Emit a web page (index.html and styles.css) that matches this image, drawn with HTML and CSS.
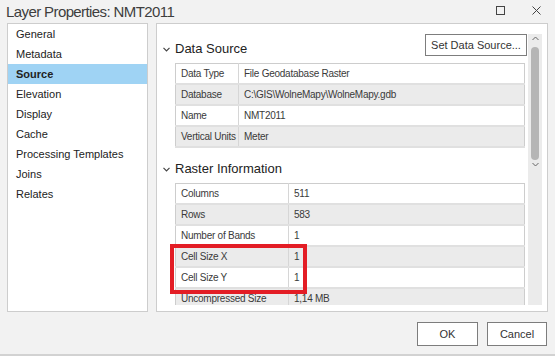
FILE: index.html
```html
<!DOCTYPE html>
<html lang="en">
<head>
    <meta charset="UTF-8">
    <meta name="viewport" content="width=device-width, initial-scale=1.0">
    <title>Layer Properties: NMT2011</title>
    <link rel="stylesheet" href="styles.css">
</head>
<body>

    <div class="dialog">
        <!-- Title Bar -->
        <div class="titlebar">
            <span class="title">Layer Properties: NMT2011</span>
            <div class="win-controls">
                <svg width="9" height="9" viewBox="0 0 9 9"><rect x="0.5" y="0.5" width="8" height="8" fill="none" stroke="#444" stroke-width="1"/></svg>
                <svg width="9" height="9" viewBox="0 0 9 9"><path d="M0.5 0.5 L8.5 8.5 M8.5 0.5 L0.5 8.5" stroke="#444" stroke-width="1"/></svg>
            </div>
        </div>

        <div class="main">
            <!-- Page List -->
            <ul class="nav">
                <li>General</li>
                <li>Metadata</li>
                <li class="active">Source</li>
                <li>Elevation</li>
                <li>Display</li>
                <li>Cache</li>
                <li>Processing Templates</li>
                <li>Joins</li>
                <li>Relates</li>
            </ul>

            <!-- Source Page -->
            <div class="pane">
                <div class="pane-content">
                    <div class="section-head">
                        <span class="section-title">
                            <svg width="7" height="5" viewBox="0 0 7 5"><path d="M0.5 0.8 L3.5 3.8 L6.5 0.8" fill="none" stroke="#444" stroke-width="1.2"/></svg>
                            Data Source
                        </span>
                        <button class="btn btn-set">Set Data Source...</button>
                    </div>
                    <table class="props props-source">
                        <tr><td>Data Type</td><td>File Geodatabase Raster</td></tr>
                        <tr><td>Database</td><td>C:\GIS\WolneMapy\WolneMapy.gdb</td></tr>
                        <tr><td>Name</td><td>NMT2011</td></tr>
                        <tr><td>Vertical Units</td><td>Meter</td></tr>
                    </table>

                    <div class="section-head section-raster">
                        <span class="section-title">
                            <svg width="7" height="5" viewBox="0 0 7 5"><path d="M0.5 0.8 L3.5 3.8 L6.5 0.8" fill="none" stroke="#444" stroke-width="1.2"/></svg>
                            Raster Information
                        </span>
                    </div>
                    <div class="table-wrap">
                        <table class="props props-raster">
                            <tr><td>Columns</td><td>511</td></tr>
                            <tr><td>Rows</td><td>583</td></tr>
                            <tr><td>Number of Bands</td><td>1</td></tr>
                            <tr><td>Cell Size X</td><td>1</td></tr>
                            <tr><td>Cell Size Y</td><td>1</td></tr>
                            <tr><td>Uncompressed Size</td><td>1,14 MB</td></tr>
                        </table>
                        <div class="highlight"></div>
                    </div>
                </div>

                <div class="scrollbar">
                    <svg width="7" height="5" viewBox="0 0 7 5"><path d="M0.5 4 L3.5 1 L6.5 4" fill="none" stroke="#666" stroke-width="1"/></svg>
                    <div class="thumb"></div>
                    <svg class="arrow-down" width="7" height="5" viewBox="0 0 7 5"><path d="M0.5 1 L3.5 4 L6.5 1" fill="none" stroke="#666" stroke-width="1"/></svg>
                </div>
            </div>
        </div>

        <!-- Dialog Buttons -->
        <div class="footer">
            <button class="btn btn-ok">OK</button>
            <button class="btn btn-cancel">Cancel</button>
        </div>
    </div>

</body>
</html>
```

FILE: styles.css
```css
body {
    font-family: "Liberation Sans", Arial, sans-serif;
    margin: 0;
    padding: 0;
    background-color: #f2f2f2;
    color: #333;
}
.dialog {
    width: 555px;
    height: 356px;
    box-sizing: border-box;
    border-bottom: 2px solid #d2d2d2;
    overflow: hidden;
}
.titlebar {
    height: 23px;
    display: flex;
    align-items: center;
    justify-content: space-between;
    padding: 0 14px 0 6px;
}
.title {
    font-size: 15px;
    letter-spacing: -0.6px;
    color: #3e3e3e;
    margin-top: -1px;
}
.win-controls {
    display: flex;
    gap: 27px;
    margin-top: -2px;
}
.main {
    display: flex;
    gap: 8px;
    padding: 0 7px;
    height: 289px;
}
.nav {
    list-style: none;
    margin: 0;
    padding: 0;
    width: 141px;
    box-sizing: border-box;
    background: white;
    border: 1px solid #cdcdcd;
    font-size: 11px;
}
.nav li {
    height: 20px;
    line-height: 20px;
    padding-left: 8px;
    color: #222;
}
.nav li.active {
    background-color: #9fd3f4;
    font-weight: bold;
}
.pane {
    flex: 1;
    display: flex;
    background: white;
    border: 1px solid #cdcdcd;
}
.pane-content {
    flex: 1;
    overflow: hidden;
    padding: 10px 3px 0 6px;
    margin-bottom: 6px;
}
.section-head {
    display: flex;
    align-items: flex-end;
    justify-content: space-between;
}
.section-title {
    display: flex;
    align-items: center;
    gap: 5px;
    font-size: 13px;
    line-height: 16px;
    color: #222;
    margin-bottom: -1px;
}
.section-raster {
    margin-top: 13px;
}
.btn {
    font-family: "Liberation Sans", Arial, sans-serif;
    background: white;
    border: 1px solid #7d7d7d;
    color: #333;
    padding: 0;
    font-size: 11px;
}
.btn-set {
    width: 102px;
    height: 22px;
    margin-right: -2px;
}
.props {
    border-collapse: collapse;
    table-layout: fixed;
    margin: 7px 0 0 12px;
    width: 350px;
    font-size: 10px;
    letter-spacing: -0.25px;
    border: 1px solid #cdcdcd;
}
.props td {
    height: 19px;
    padding: 0 5px;
    border-bottom: 2px solid #e0e0e0;
    white-space: nowrap;
    overflow: hidden;
    color: #3a3a3a;
}
.props td:first-child {
    border-right: 1px solid #d6d6d6;
}
.props tr:nth-child(even) td {
    background: #ebebeb;
}
.props-source td:first-child {
    width: 52px;
}
.props-raster td:first-child {
    width: 102px;
}
.table-wrap {
    position: relative;
}
.highlight {
    position: absolute;
    left: 7px;
    top: 61px;
    width: 129px;
    height: 42px;
    border: 4px solid #e31d25;
}
.scrollbar {
    width: 14px;
    margin: 10px 5px 6px 0;
    background: #ebebeb;
    display: flex;
    flex-direction: column;
    align-items: center;
}
.scrollbar svg {
    margin-top: 2px;
}
.thumb {
    width: 8px;
    height: 113px;
    margin-top: 6px;
    border-radius: 4px;
    background: #b5b5b5;
}
.arrow-down {
    margin-top: auto;
    margin-bottom: 4px;
}
.footer {
    display: flex;
    justify-content: flex-end;
    gap: 9px;
    padding: 10px 8px 0 0;
}
.btn-ok {
    width: 61px;
    height: 24px;
}
.btn-cancel {
    width: 60px;
    height: 24px;
}
```
